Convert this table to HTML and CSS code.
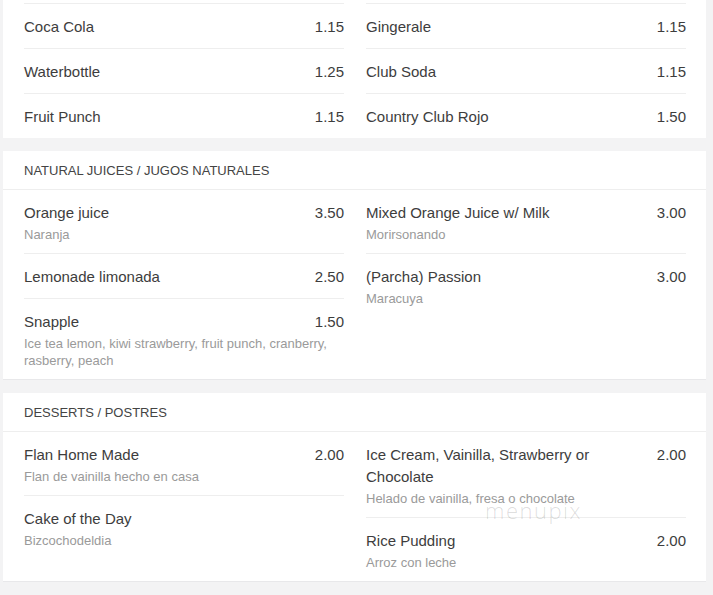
FILE: index.html
```html
<!DOCTYPE html>
<html lang="en">
<head>
<meta charset="utf-8">
<title>Menu</title>
<link rel="stylesheet" href="styles.css">
</head>
<body>
<div class="page">
  <section class="card card--continued">
    <div class="cols">
      <div class="col">
        <div class="item"><div class="row"><span class="name">Coca Cola</span><span class="price">1.15</span></div></div>
        <div class="item"><div class="row"><span class="name">Waterbottle</span><span class="price">1.25</span></div></div>
        <div class="item"><div class="row"><span class="name">Fruit Punch</span><span class="price">1.15</span></div></div>
      </div>
      <div class="col">
        <div class="item"><div class="row"><span class="name">Gingerale</span><span class="price">1.15</span></div></div>
        <div class="item"><div class="row"><span class="name">Club Soda</span><span class="price">1.15</span></div></div>
        <div class="item"><div class="row"><span class="name">Country Club Rojo</span><span class="price">1.50</span></div></div>
      </div>
    </div>
  </section>

  <section class="card">
    <h2 class="card-title">NATURAL JUICES / JUGOS NATURALES</h2>
    <div class="cols">
      <div class="col">
        <div class="item"><div class="row"><span class="name">Orange juice</span><span class="price">3.50</span></div><p class="desc">Naranja</p></div>
        <div class="item"><div class="row"><span class="name">Lemonade limonada</span><span class="price">2.50</span></div></div>
        <div class="item"><div class="row"><span class="name">Snapple</span><span class="price">1.50</span></div><p class="desc">Ice tea lemon, kiwi strawberry, fruit punch, cranberry, rasberry, peach</p></div>
      </div>
      <div class="col">
        <div class="item"><div class="row"><span class="name">Mixed Orange Juice w/ Milk</span><span class="price">3.00</span></div><p class="desc">Morirsonando</p></div>
        <div class="item"><div class="row"><span class="name">(Parcha) Passion</span><span class="price">3.00</span></div><p class="desc">Maracuya</p></div>
      </div>
    </div>
  </section>

  <section class="card card--marked">
    <h2 class="card-title">DESSERTS / POSTRES</h2>
    <div class="cols">
      <div class="col">
        <div class="item"><div class="row"><span class="name">Flan Home Made</span><span class="price">2.00</span></div><p class="desc">Flan de vainilla hecho en casa</p></div>
        <div class="item"><div class="row"><span class="name">Cake of the Day</span></div><p class="desc">Bizcochodeldia</p></div>
      </div>
      <div class="col">
        <div class="item"><div class="row"><span class="name">Ice Cream, Vainilla, Strawberry or Chocolate</span><span class="price">2.00</span></div><p class="desc">Helado de vainilla, fresa o chocolate</p></div>
        <div class="item"><div class="row"><span class="name">Rice Pudding</span><span class="price">2.00</span></div><p class="desc">Arroz con leche</p></div>
      </div>
    </div>
    <span class="watermark">menupix</span>
  </section>
</div>
</body>
</html>
```

FILE: styles.css
```css
* { box-sizing: border-box; }

html, body {
  margin: 0;
  padding: 0;
  background: #f3f3f4;
  font-family: "Liberation Sans", Arial, sans-serif;
  color: #3d3d3d;
}

.page {
  padding: 0 7px 0 3px;
  display: flex;
  flex-direction: column;
  gap: 13px;
}

.card {
  background: #ffffff;
  border-bottom: 1px solid #e8e8ea;
  position: relative;
}

.card--continued {
  padding-top: 3px;
  border-bottom: none;
}

.card-title {
  margin: 0;
  padding: 11px 21px 10px;
  font-size: 13px;
  line-height: 17px;
  font-weight: normal;
  color: #444;
  border-bottom: 1px solid #eeeeee;
}

.cols {
  display: grid;
  grid-template-columns: 320px 320px;
  column-gap: 22px;
  padding: 0 20px 0 21px;
}

.item {
  padding: 12px 0 10px;
  border-bottom: 1px solid #eeeeee;
}

.item:last-child {
  border-bottom: none;
}

.card--continued .item {
  border-top: 1px solid #eeeeee;
  border-bottom: none;
}

.row {
  display: flex;
  justify-content: space-between;
  align-items: flex-start;
  gap: 20px;
}

.name {
  font-size: 15px;
  line-height: 22px;
  color: #3d3d3d;
}

.price {
  font-size: 15px;
  line-height: 22px;
  color: #3d3d3d;
  white-space: nowrap;
}

.desc {
  margin: 2px 0 0;
  font-size: 13px;
  line-height: 17px;
  color: #9a9a9a;
}

.watermark {
  position: absolute;
  left: 482px;
  top: 102px;
  font-family: "Open Sans", sans-serif;
  font-weight: 300;
  font-size: 22px;
  line-height: 30px;
  letter-spacing: 1.5px;
  color: rgba(0, 0, 0, 0.14);
  pointer-events: none;
}
```
